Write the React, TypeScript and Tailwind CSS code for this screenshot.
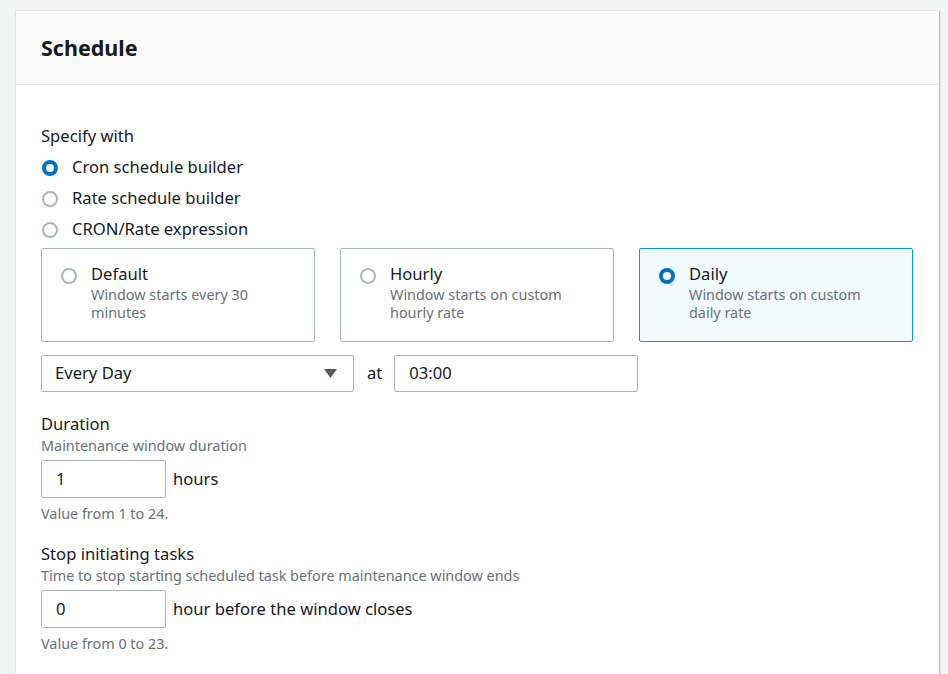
import React from "react";

const font = { fontFamily: '"Noto Sans", "Open Sans", sans-serif' };

function Radio({ checked }: { checked?: boolean }) {
  return checked ? (
    <span className="inline-block h-4 w-4 shrink-0 rounded-full border-[4px] border-[#0073bb] bg-white" />
  ) : (
    <span className="inline-block h-4 w-4 shrink-0 rounded-full border-2 border-[#aab7b8] bg-white" />
  );
}

function Card({ title, desc, checked }: { title: string; desc: string; checked?: boolean }) {
  return (
    <div
      className={
        "flex h-[94px] flex-1 gap-[14px] rounded-[2px] border px-[19px] pt-[14px] " +
        (checked ? "border-[#00a1c9] bg-[#f1faff]" : "border-[#aab7b8] bg-white")
      }
    >
      <div className="pt-[3px]">
        <Radio checked={checked} />
      </div>
      <div>
        <div className="text-[16.6px] leading-[22px] text-[#16191f]">{title}</div>
        <div className="mt-px w-[200px] text-[14.4px] leading-[18px] text-[#687078]">{desc}</div>
      </div>
    </div>
  );
}

export default function App() {
  return (
    <div className="min-h-[674px] bg-[#f2f3f3] pl-[15px] pr-[9px] pt-[10px]" style={font}>
      <div className="border-l border-t border-[#e3e5e5] bg-white shadow-[1px_1px_1px_rgba(0,28,36,0.25)]">
        <div className="flex h-[74px] items-center border-b border-[#e6e8e8] bg-[#fafafa] px-[25px]">
          <h2 className="text-[21.5px] font-bold leading-[26px] text-[#16191f]">Schedule</h2>
        </div>
        <div className="px-[25px] pb-[40px] pt-[40px] text-[#16191f]">
          <div className="text-[16.6px] leading-[22px]">Specify with</div>
          <div className="mt-[5px] flex flex-col">
            {[
              ["Cron schedule builder", true],
              ["Rate schedule builder", false],
              ["CRON/Rate expression", false],
            ].map(([label, c]) => (
              <div key={label as string} className="flex h-[31px] items-center gap-[14px] pl-px">
                <Radio checked={c as boolean} />
                <span className="text-[16.6px]">{label as string}</span>
              </div>
            ))}
          </div>
          <div className="mt-[3px] flex w-[872px] gap-[25px]">
            <Card title="Default" desc="Window starts every 30 minutes" />
            <Card title="Hourly" desc="Window starts on custom hourly rate" />
            <Card title="Daily" desc="Window starts on custom daily rate" checked />
          </div>
          <div className="mt-[13px] flex items-center">
            <div className="flex h-[37px] w-[313px] items-center justify-between rounded-[2px] border border-[#aab7b8] pl-[13px] pr-[15px]">
              <span className="text-[16.6px]">Every Day</span>
              <svg width="15" height="11" viewBox="0 0 15 11">
                <path d="M1 1 L14 1 L7.5 10 Z" fill="#545b64" />
              </svg>
            </div>
            <span className="ml-[13px] mr-[12px] text-[16.6px]">at</span>
            <div className="flex h-[37px] w-[244px] items-center rounded-[2px] border border-[#aab7b8] px-[14px]">
              <span className="text-[16.6px]">03:00</span>
            </div>
          </div>

          <div className="mt-[21px]">
            <div className="text-[16.6px] leading-[22px]">Duration</div>
            <div className="mt-px text-[14.4px] leading-[20px] text-[#687078]">Maintenance window duration</div>
            <div className="mt-[4px] flex items-center gap-[7px]">
              <div className="flex h-[38px] w-[125px] items-center rounded-[2px] border border-[#aab7b8] px-[14px]">
                <span className="text-[16.6px]">1</span>
              </div>
              <span className="text-[16.6px]">hours</span>
            </div>
            <div className="mt-[5px] text-[14.4px] leading-[22px] text-[#687078]">Value from 1 to 24.</div>
          </div>

          <div className="mt-[18px]">
            <div className="text-[16.6px] leading-[22px]">Stop initiating tasks</div>
            <div className="mt-px text-[14.4px] leading-[20px] text-[#687078]">
              Time to stop starting scheduled task before maintenance window ends
            </div>
            <div className="mt-[4px] flex items-center gap-[7px]">
              <div className="flex h-[38px] w-[125px] items-center rounded-[2px] border border-[#aab7b8] px-[14px]">
                <span className="text-[16.6px]">0</span>
              </div>
              <span className="text-[16.6px]">hour before the window closes</span>
            </div>
            <div className="mt-[5px] text-[14.4px] leading-[22px] text-[#687078]">Value from 0 to 23.</div>
          </div>
        </div>
      </div>
    </div>
  );
}
